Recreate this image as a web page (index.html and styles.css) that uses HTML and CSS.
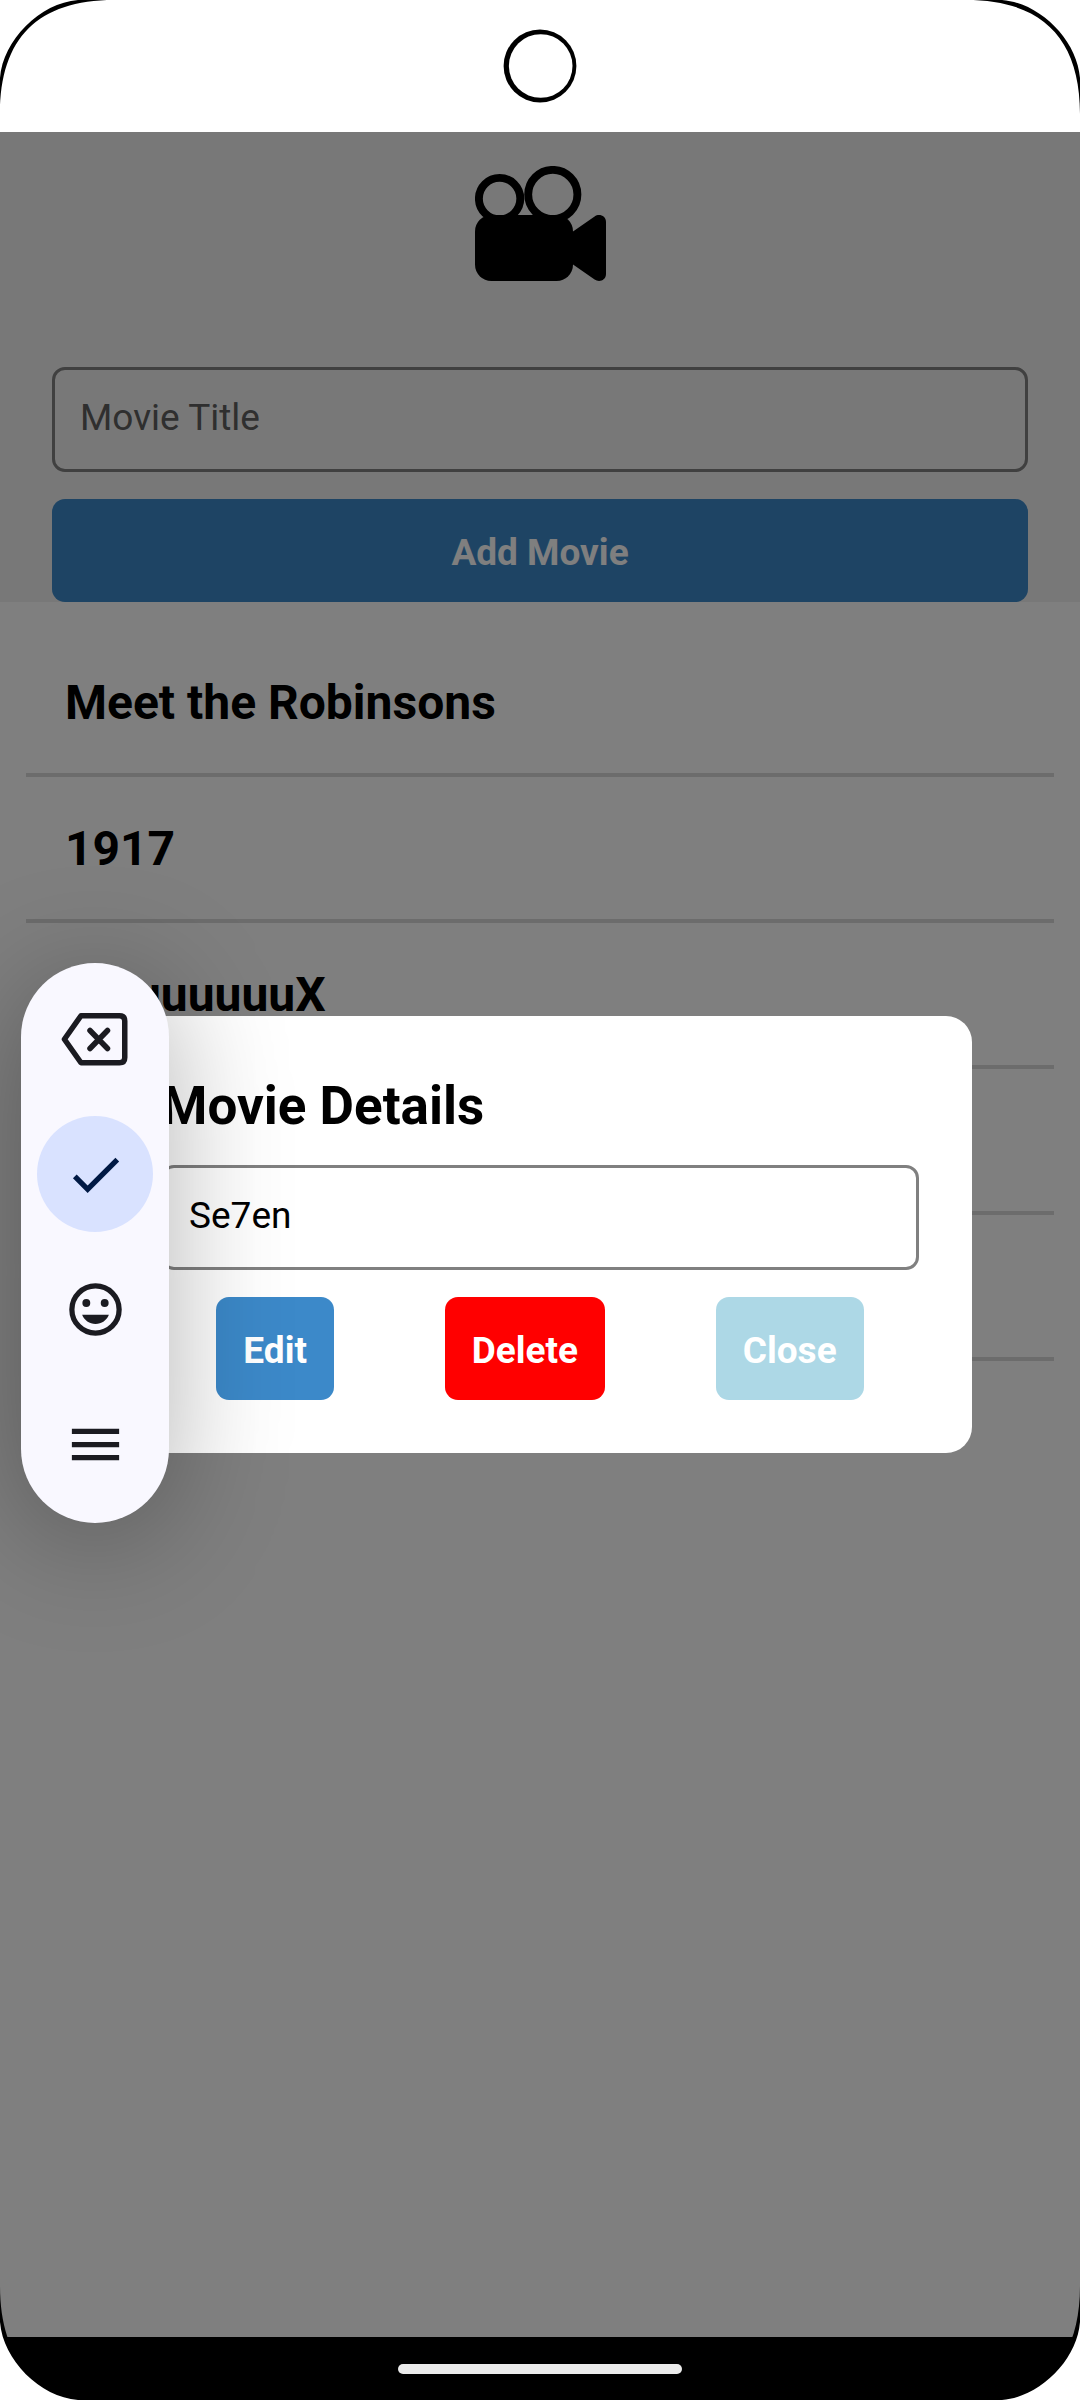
FILE: index.html
```html
<!DOCTYPE html>
<html lang="en">
<head>
  <meta charset="utf-8">
  <meta name="viewport" content="width=device-width, initial-scale=1">
  <title>Movies</title>
  <link rel="stylesheet" href="styles.css">
</head>
<body>
  <div class="phone">
    <div class="status-bar">
      <svg class="camera-hole" viewBox="0 0 74 74" aria-hidden="true">
        <circle cx="37" cy="37" r="36.4"/>
        <circle class="lens" cx="37.7" cy="37" r="31.8"/>
      </svg>
    </div>

    <div class="app">
      <header class="header">
        <svg class="logo" viewBox="0 0 131 115" role="img" aria-label="Movie camera">
          <circle class="reel" cx="24.6" cy="32.6" r="20.7"/>
          <circle class="reel" cx="77.8" cy="28.5" r="24.6"/>
          <rect y="49" width="98" height="66" rx="16.4"/>
          <path d="M98 65.6 L119.6 50.5 C124 47.4 131 49.6 131 56 V108 C131 114.4 124 116.6 119.6 113.5 L98 98.4Z"/>
        </svg>
        <form class="add-form">
          <input class="field" type="text" placeholder="Movie Title" aria-label="Movie Title">
          <button class="btn btn-primary" type="button">Add Movie</button>
        </form>
      </header>

      <ul class="movies">
        <li class="movie">Meet the Robinsons</li>
        <li class="movie">1917</li>
        <li class="movie">MuuuuuuuX</li>
        <li class="movie"></li>
        <li class="movie"></li>
      </ul>

      <div class="overlay">
        <section class="modal" role="dialog" aria-labelledby="modal-title">
          <h2 class="modal-title" id="modal-title">Movie Details</h2>
          <input class="field" type="text" value="Se7en" aria-labelledby="modal-title">
          <div class="actions">
            <button class="btn btn-primary" type="button">Edit</button>
            <button class="btn btn-danger" type="button">Delete</button>
            <button class="btn btn-light" type="button">Close</button>
          </div>
        </section>
      </div>
    </div>

    <nav class="nav-bar"><span class="nav-handle"></span></nav>

    <div class="toolbar" role="toolbar" aria-label="Keyboard tools">
      <button class="tool" type="button" aria-label="Backspace">
        <svg class="icon-backspace" viewBox="1 0 67 53" aria-hidden="true">
          <path d="M20 2.75 H58.5 Q63.75 2.75 63.75 8 V44.5 Q63.75 49.75 58.5 49.75 H20 L3.4 26.25Z"/>
          <path d="M29 17.5 L46.5 35.5 M46.5 17.5 L29 35.5"/>
        </svg>
      </button>
      <button class="tool tool-active" type="button" aria-label="Done">
        <svg class="icon" viewBox="0 0 24 24" aria-hidden="true"><path d="M9 16.17 4.83 12l-1.42 1.41L9 19 21 7l-1.41-1.41z"/></svg>
      </button>
      <button class="tool" type="button" aria-label="Emoji">
        <svg class="icon" viewBox="0 0 24 24" aria-hidden="true">
          <circle class="face" cx="12" cy="12" r="9"/>
          <circle cx="8.5" cy="9.5" r="1.5"/>
          <circle cx="15.5" cy="9.5" r="1.5"/>
          <path d="M6.9 14 C7.7 16.1 9.7 17.5 12 17.5 S16.3 16.1 17.1 14Z"/>
        </svg>
      </button>
      <button class="tool" type="button" aria-label="Menu">
        <svg class="icon" viewBox="0 0 24 24" aria-hidden="true"><path d="M3 18h18v-2H3v2zm0-5h18v-2H3v2zm0-7v2h18V6H3z"/></svg>
      </button>
    </div>

    <svg class="corner corner-tl" viewBox="0 0 114 114" aria-hidden="true"><path d="M0 0H114C38 0 0 38 0 114Z"/><path class="outside" d="M0 0H78C40 3 3 40 0 78Z"/></svg>
    <svg class="corner corner-tr" viewBox="0 0 114 114" aria-hidden="true"><path d="M0 0H114C38 0 0 38 0 114Z"/><path class="outside" d="M0 0H78C40 3 3 40 0 78Z"/></svg>
    <svg class="corner corner-bl" viewBox="0 0 114 114" aria-hidden="true"><path d="M0 0H114C38 0 0 38 0 114Z"/><path class="outside" d="M0 0H78C40 3 3 40 0 78Z"/></svg>
    <svg class="corner corner-br" viewBox="0 0 114 114" aria-hidden="true"><path d="M0 0H114C38 0 0 38 0 114Z"/><path class="outside" d="M0 0H78C40 3 3 40 0 78Z"/></svg>
  </div>
</body>
</html>
```
FILE: styles.css
```css
* {
  box-sizing: border-box;
}

body {
  margin: 0;
  font-family: Roboto, "Liberation Sans", sans-serif;
  color: #000;
  background: #fff;
}

.phone {
  position: relative;
  display: flex;
  flex-direction: column;
  min-height: 100vh;
  overflow: hidden;
}

/* System bars */
.status-bar {
  display: flex;
  justify-content: center;
  align-items: center;
  height: 132px;
}

.camera-hole {
  width: 74px;
  height: 74px;
}

.camera-hole .lens {
  fill: #fff;
}

.nav-bar {
  display: flex;
  justify-content: center;
  align-items: center;
  height: 63px;
  background: #000;
}

.nav-handle {
  width: 284px;
  height: 10px;
  border-radius: 5px;
  background: #ebebeb;
}

/* App */
.app {
  position: relative;
  flex: 1;
  background: #fff;
}

.header {
  display: flex;
  flex-direction: column;
  gap: 86px;
  padding: 34px 52px 0;
  background: #f1f1f1;
}

.logo {
  align-self: center;
  width: 131px;
  height: 115px;
}

.logo .reel {
  fill: none;
  stroke: #000;
  stroke-width: 7.9;
}

.add-form {
  display: flex;
  flex-direction: column;
  gap: 27px;
}

.field {
  width: 100%;
  height: 105px;
  padding: 0 25px 4px;
  border: 3px solid #808080;
  border-radius: 13px;
  background: transparent;
  font: 400 37px Roboto, "Liberation Sans", sans-serif;
  color: #000;
}

.field::placeholder {
  color: #5e5e5e;
  opacity: 1;
}

.btn {
  height: 103px;
  padding: 4px 27px 0;
  border: 0;
  border-radius: 13px;
  font: 700 37px Roboto, "Liberation Sans", sans-serif;
  color: #fff;
}

.btn-primary {
  background: #3c89c9;
}

.btn-danger {
  background: #f00;
}

.btn-light {
  background: #add8e6;
}

.movies {
  margin: 0;
  padding: 29px 26px 0;
  list-style: none;
}

.movie {
  height: 146px;
  padding: 0 39px;
  border-bottom: 4px solid #d8d8d8;
  font-size: 48px;
  font-weight: 700;
  line-height: 144px;
}

/* Details dialog */
.overlay {
  position: absolute;
  inset: 0;
  display: flex;
  flex-direction: column;
  justify-content: center;
  padding: 0 10%;
  background: rgba(0, 0, 0, 0.5);
}

.modal {
  padding: 53px;
  border-radius: 26px;
  background: #fff;
}

.modal-title {
  margin: 0 0 22px;
  font-size: 53px;
  font-weight: 700;
  line-height: 74px;
}

.actions {
  display: flex;
  justify-content: space-around;
  margin-top: 27px;
}

/* Floating keyboard toolbar */
.toolbar {
  position: absolute;
  top: 963px;
  left: 21px;
  display: flex;
  flex-direction: column;
  gap: 19px;
  padding: 18px 16px 21px;
  border-radius: 74px;
  background: #f9f8ff;
  box-shadow: 0 16px 120px rgba(0, 0, 0, 0.3);
}

.tool {
  display: flex;
  justify-content: center;
  align-items: center;
  width: 116px;
  height: 116px;
  padding: 0;
  border: 0;
  border-radius: 50%;
  background: none;
  color: #1b1b21;
}

.tool-active {
  background: #d9e2ff;
  color: #001944;
}

.icon {
  width: 63px;
  height: 63px;
  fill: currentColor;
}

.icon .face {
  fill: none;
  stroke: currentColor;
  stroke-width: 2;
}

.icon-backspace {
  width: 67px;
  height: 53px;
  overflow: visible;
  fill: none;
  stroke: currentColor;
  stroke-width: 5.5;
  stroke-linecap: round;
  stroke-linejoin: round;
}

/* Rounded screen corners */
.corner {
  position: absolute;
  width: 114px;
  height: 114px;
}

.corner .outside {
  fill: #fff;
}

.corner-tl {
  top: 0;
  left: 0;
}

.corner-tr {
  top: 0;
  right: 0;
  transform: scaleX(-1);
}

.corner-bl {
  bottom: 0;
  left: 0;
  transform: scaleY(-1);
}

.corner-br {
  right: 0;
  bottom: 0;
  transform: scale(-1);
}
```
